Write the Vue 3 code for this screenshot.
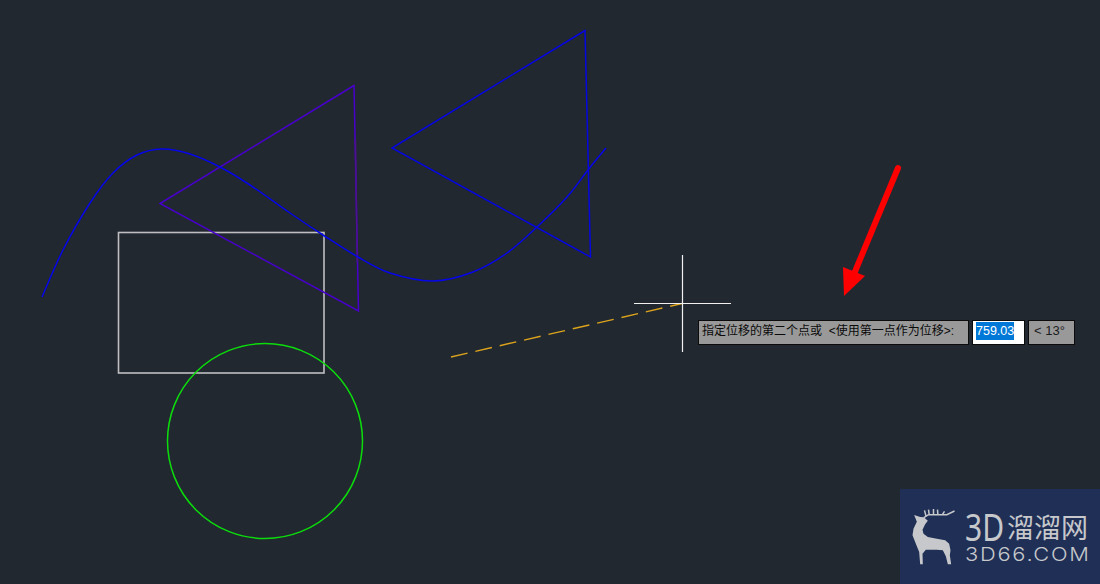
<template>
  <div class="page">
    <!-- 绘图区 -->
    <svg class="canvas" width="1100" height="584" viewBox="0 0 1100 584">
      <rect x="118.5" y="232.5" width="205.5" height="140.5" fill="none" stroke="#bfbfc1" stroke-width="1.6" />
      <circle cx="265" cy="441" r="97.5" fill="none" stroke="#0cdc0c" stroke-width="1.5" />
      <path d="M354 85.5 L160 203.5 L358.5 311 Z" fill="none" stroke="#4800cc" stroke-width="1.5" />
      <line x1="355.4" y1="140" x2="357.3" y2="262" stroke="#4c1090" stroke-width="1.5" />
      <path d="M585 30.5 L392 148 L590.5 257 Z" fill="none" stroke="#0606e0" stroke-width="1.5" />
      <path :d="splinePath" fill="none" stroke="#0606e8" stroke-width="1.5" />
      <line x1="451" y1="357" x2="682" y2="303.5" stroke="#dca31c" stroke-width="1.4" stroke-dasharray="17 8" />
      <line x1="682.5" y1="255" x2="682.5" y2="352" stroke="#f0f0f0" stroke-width="1.2" />
      <line x1="634" y1="303.5" x2="731" y2="303.5" stroke="#f0f0f0" stroke-width="1.2" />
      <!-- 红色箭头 -->
      <line x1="898" y1="168" x2="854" y2="274" stroke="#ff0000" stroke-width="6" stroke-linecap="round" />
      <path d="M844 296 L843 267 L865 276 Z" fill="#ff0000" />
    </svg>

    <!-- 动态输入提示 -->
    <div class="prompt">
      <div class="prompt-label">指定位移的第二个点或&nbsp;&nbsp;&lt;使用第一点作为位移&gt;:</div>
      <div class="prompt-input"><span class="selected">759.03</span></div>
      <div class="prompt-angle">&lt; 13°</div>
    </div>

    <!-- 水印 -->
    <div class="logo">
      <svg class="deer" width="47" height="60" viewBox="15 20 140 180">
        <path d="M27 44 L45 50 L56 51 L68 61 L60 72 L52 88 L55 100 L68 110 L95 115 L120 120 L132 130 L136 150 L134 165 L138 192 L128 192 L122 168 L113 150 L95 148 L62 148 L52 160 L53 192 L45 192 L42 155 L32 130 L22 105 L25 85 L35 64 Z" fill="#c6c8cc" />
        <path d="M56 52 L70 43 L125 43 L148 32 M62 46 L58 30 M72 42 L70 28 M85 42 L85 26 M98 42 L97 28 M112 42 L118 33" fill="none" stroke="#c6c8cc" stroke-width="4.5" />
      </svg>
      <div class="logo-text">
        <div class="logo-cn"><span class="logo-3d">3D</span>溜溜网</div>
        <div class="logo-en">3D66.COM</div>
      </div>
    </div>
  </div>
</template>

<script setup>
// 样条曲线的拟合点
const points = [
  [42, 297], [63, 250], [90, 203], [113, 173], [137, 155], [162, 149],
  [190, 154], [220, 167], [250, 185], [290, 213], [323, 235], [358, 257],
  [390, 273], [433, 281], [473, 272], [507, 253], [537, 227], [567, 197],
  [588, 170], [606, 148]
]

// Catmull-Rom 转贝塞尔
function toPath(pts) {
  let d = `M${pts[0][0]} ${pts[0][1]}`
  for (let i = 0; i < pts.length - 1; i++) {
    const p0 = pts[Math.max(i - 1, 0)]
    const p1 = pts[i]
    const p2 = pts[i + 1]
    const p3 = pts[Math.min(i + 2, pts.length - 1)]
    const c1x = p1[0] + (p2[0] - p0[0]) / 6
    const c1y = p1[1] + (p2[1] - p0[1]) / 6
    const c2x = p2[0] - (p3[0] - p1[0]) / 6
    const c2y = p2[1] - (p3[1] - p1[1]) / 6
    d += ` C${c1x} ${c1y} ${c2x} ${c2y} ${p2[0]} ${p2[1]}`
  }
  return d
}

const splinePath = toPath(points)
</script>

<style>
html, body { margin: 0; background: #212830; }
</style>

<style scoped>
.page {
  position: relative;
  width: 1100px;
  height: 584px;
  overflow: hidden;
  background: #212830;
  font-family: "Liberation Sans", "Noto Sans CJK SC", sans-serif;
}
.canvas {
  display: block;
}
.prompt {
  position: absolute;
  left: 698px;
  top: 320px;
  display: flex;
  gap: 3px;
  height: 25px;
  color: #0a0a0a;
}
.prompt-label, .prompt-angle {
  box-sizing: border-box;
  height: 25px;
  background: #999999;
  border: 1px solid #0c0c0c;
  white-space: pre;
  line-height: 20px;
}
.prompt-label {
  width: 271px;
  padding-left: 3px;
  font-size: 12px;
}
.prompt-angle {
  width: 47px;
  padding-left: 5px;
  font-size: 13px;
  color: #1c1c1c;
}
.prompt-input {
  box-sizing: border-box;
  width: 53px;
  height: 25px;
  padding: 1px 3px;
  background: #fff;
  border: 1px solid #0c0c0c;
  font-size: 12.5px;
  line-height: 18px;
}
.selected {
  display: block;
  width: 38px;
  height: 18px;
  background: #0078d7;
  color: #fff;
}
.logo {
  position: absolute;
  right: 0;
  bottom: 0;
  width: 200px;
  height: 95px;
  display: flex;
  align-items: center;
  gap: 8px;
  padding-left: 10px;
  box-sizing: border-box;
  background: #202f55;
  color: #c6c8cc;
}
.logo-text {
  padding-top: 2px;
}
.logo-cn {
  height: 32px;
  font-size: 27px;
  line-height: 32px;
  font-family: "Noto Sans CJK SC", sans-serif;
  white-space: nowrap;
}
.logo-3d {
  display: inline-block;
  margin-right: 3px;
  font-family: "Noto Sans", sans-serif;
  font-size: 30px;
  line-height: 22px;
  transform: scaleY(1.25);
}
.logo-en {
  margin-top: 2px;
  font-size: 19px;
  line-height: 20px;
  letter-spacing: 1.5px;
  font-family: Inter, sans-serif;
  font-weight: 300;
  white-space: nowrap;
  transform: scaleX(1.15);
  transform-origin: left center;
}
</style>
